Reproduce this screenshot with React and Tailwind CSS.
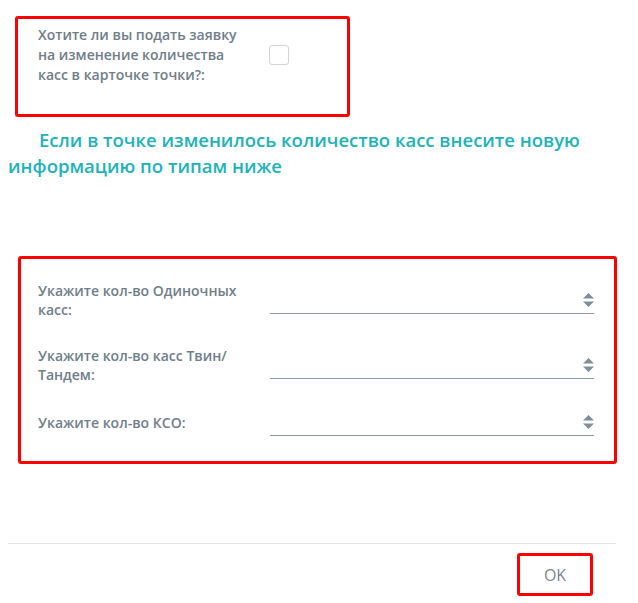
import React from 'react';

const labelCls = "w-[232px] shrink-0 pr-[12px] text-[14px] font-semibold text-[#6f7e88]";

function Spinner() {
  return (
    <svg width="11" height="14" viewBox="0 0 11 14" className="absolute right-0 top-1/2 -translate-y-1/2">
      <polygon points="5.5,0 11,5.5 0,5.5" fill="#7f8e97" />
      <polygon points="0,8.5 11,8.5 5.5,14" fill="#7f8e97" />
    </svg>
  );
}

function NumberField() {
  return (
    <div className="relative h-[28px] w-[324px] border-b border-[#8c9aa3]">
      <Spinner />
    </div>
  );
}

export default function App() {
  return (
    <div className="w-[638px] h-[603px] bg-white font-['Open_Sans',sans-serif] overflow-hidden">
      {/* checkbox question */}
      <div className="pt-[16px] pl-[15px]">
        <div className="w-[335px] border-[3px] border-[#ff0000] rounded-[3px] pl-[20px] pt-[6px] pb-[29px] flex items-center">
          <div className="w-[215px] shrink-0 text-[14px] font-semibold text-[#6f7e88] leading-[20px]">
            Хотите ли вы подать заявку на изменение количества касс в карточке точки?:
          </div>
          <div className="ml-[16px] w-[20px] h-[20px] border border-[#d4d4d4] rounded-[3px] bg-white" />
        </div>
      </div>

      <p className="mt-[10px] px-[8px] text-[18.5px] leading-[26px] font-semibold text-[#20b3b6] indent-[31px]">
        Если в точке изменилось количество касс внесите новую информацию по типам ниже
      </p>

      {/* counts */}
      <div className="mt-[77px] ml-[18px] w-[599px] border-[3px] border-[#ff0000] rounded-[3px] pl-[17px] pt-[22px] pb-[25px]">
        <div className="flex items-center">
          <div className={labelCls + " leading-[19px]"}>Укажите кол-во Одиночных касс:</div>
          <NumberField />
        </div>
        <div className="flex items-center mt-[27px]">
          <div className={labelCls + " leading-[19px]"}>Укажите кол-во касс Твин/<wbr />Тандем:</div>
          <NumberField />
        </div>
        <div className="flex items-center mt-[24px]">
          <div className={labelCls + " leading-[19px]"}>Укажите кол-во КСО:</div>
          <NumberField />
        </div>
      </div>

      {/* footer */}
      <div className="mt-[79px] ml-[8px] w-[608px] border-t border-[#e3e3e3]" />
      <div className="flex justify-end mt-[9px] mr-[45px]">
        <button className="w-[76px] h-[43px] border-[3px] border-[#ff0000] rounded-[3px] text-[16px] text-[#7b8690] flex items-center justify-center">
          OK
        </button>
      </div>
    </div>
  );
}
